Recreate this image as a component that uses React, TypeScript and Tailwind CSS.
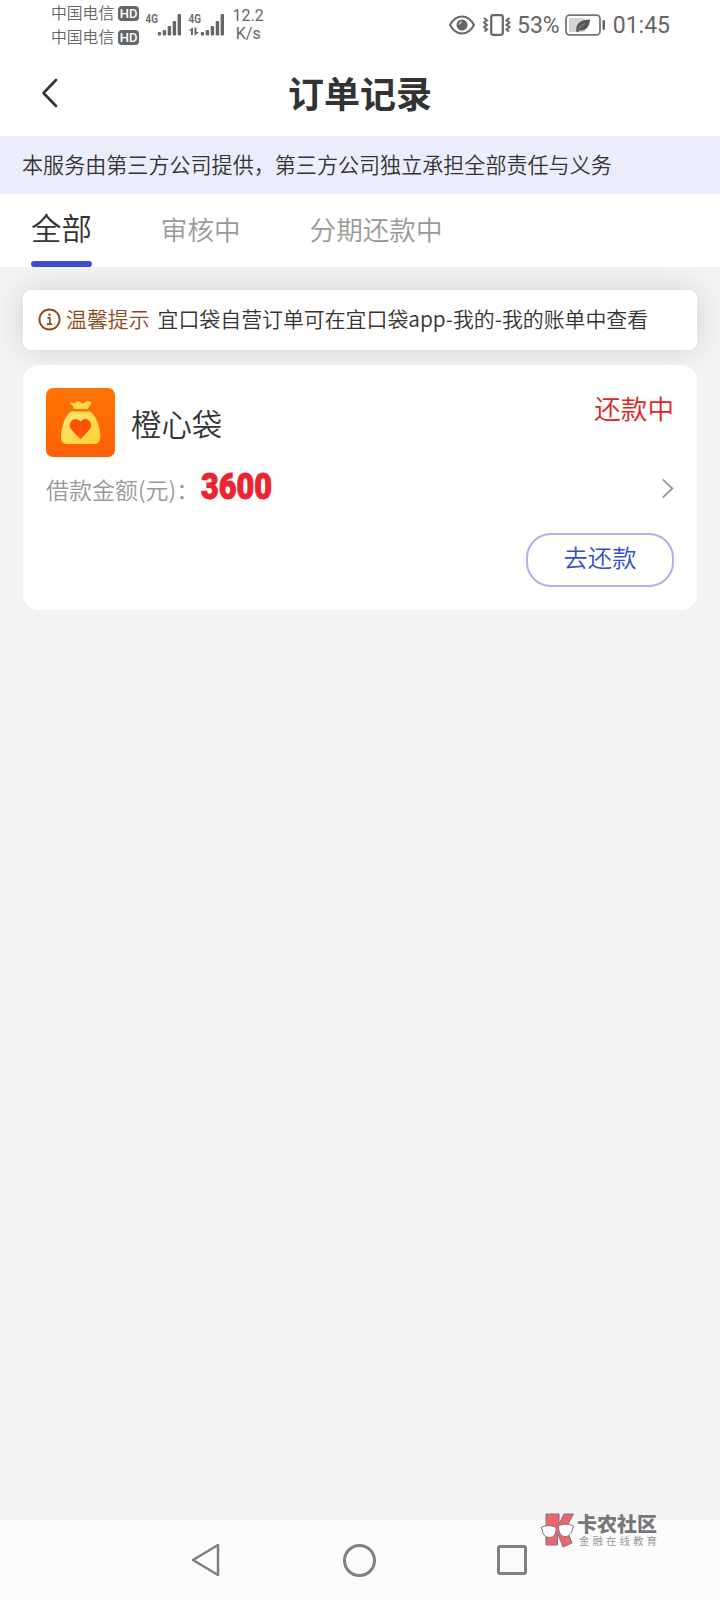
const carriers = ["中国电信", "中国电信"];

const tabs = [
  { label: "全部", active: true },
  { label: "审核中", active: false },
  { label: "分期还款中", active: false },
];

function SignalBars({ data = false }: { data?: boolean }) {
  return (
    <svg className="h-6 w-9 overflow-visible" viewBox="0 0 36 24" fill="#666">
      <text x="0.5" y="9.5" fontSize="12.5" fontWeight="600" fontFamily="Roboto, sans-serif" textLength="12.5" lengthAdjust="spacingAndGlyphs">
        4G
      </text>
      <rect x="12.8" y="19" width="3.2" height="3.5" rx="1" />
      <rect x="17.7" y="17" width="3.4" height="5.5" rx="1" />
      <rect x="22.7" y="13" width="3.4" height="9.5" rx="1" />
      <rect x="27.7" y="8" width="3.4" height="14.5" rx="1" />
      <rect x="32.6" y="1" width="3.4" height="21.5" rx="1" />
      {data && <path d="M5 14.500v7.500H3v-4.500H.3zM6.500 14.500h2v4.500H11L7 22.500h-.5z" />}
    </svg>
  );
}

function StatusBar() {
  return (
    <div className="flex h-[50px] items-center justify-between pl-[51px] pr-[50px] font-['Roboto','Noto_Sans_CJK_SC',sans-serif] font-normal text-[#666]">
      <div className="flex items-center">
        <div className="flex flex-col pt-px">
          {carriers.map((name, i) => (
            <div key={i} className="flex h-6 items-center gap-1">
              <span className="text-[15.8px] font-[350] leading-6">{name}</span>
              <span className="flex h-[15px] w-[21px] items-center justify-center rounded bg-[#666] text-[13px] font-medium leading-none text-white">
                HD
              </span>
            </div>
          ))}
        </div>
        <div className="ml-[6px] flex gap-[7px]">
          <SignalBars />
          <SignalBars data />
        </div>
        <div className="ml-[8px] w-[32px] text-center text-[16px] leading-[18px]">
          <div>12.2</div>
          <div>K/s</div>
        </div>
      </div>

      <div className="flex items-center">
        <svg className="h-5 w-[26px]" viewBox="0 0 26 20" fill="none" stroke="#666">
          <path d="M1 10C4 4.500 8.300 1.500 13 1.500S22 4.500 25 10c-3 5.500-7.300 8.500-12 8.500S4 15.500 1 10z" strokeWidth="2" />
          <circle cx="13" cy="10" r="5.500" fill="#666" stroke="none" />
          <path d="M10.300 9.500a3 3 0 0 1 2.500-2.500" stroke="#ddd" strokeWidth="1.300" />
        </svg>
        <svg className="ml-[8px] h-[22px] w-7" viewBox="0 0 28 22" fill="none" stroke="#666">
          <rect x="8.200" y="1.200" width="11.600" height="19.600" rx="2" strokeWidth="2.200" />
          <path d="M1 4l3 2.500-3 2 3 2.500-3 2 3 2.500-2.500 2M26.500 4l-3 2.500 3 2-3 2.500 3 2-3 2.500 2.500 2" strokeWidth="2" />
        </svg>
        <span className="ml-[6px] text-[23px] leading-none">53%</span>
        <svg className="ml-[5px] h-[22px] w-[41px]" viewBox="0 0 41 22" fill="none">
          <rect x="4" y="4" width="16" height="14" fill="#d4d4d4" />
          <rect x="1" y="1.200" width="34" height="19.600" rx="3.500" stroke="#777" strokeWidth="1.800" />
          <rect x="37.500" y="6" width="2.500" height="10" rx="1" fill="#666" />
          <path d="M11.500 18c-1.500-8 3-12 13.500-12.500C24.500 13 21 17 14.500 16.500l-1.500 1.800z" fill="#555" />
          <path d="M13.500 15.500c1.500-3 4-5 6.500-6" stroke="#aaa" strokeWidth="0.800" />
        </svg>
        <span className="ml-[7px] text-[23px] leading-none">01:45</span>
      </div>
    </div>
  );
}

function MoneyBag() {
  return (
    <svg className="h-[69px] w-[69px]" viewBox="0 0 69 69">
      <defs>
        <linearGradient id="tile" x1="0" y1="0" x2="0" y2="1">
          <stop offset="0" stopColor="#ff7400" />
          <stop offset="1" stopColor="#ff600a" />
        </linearGradient>
        <linearGradient id="bag" x1="0" y1="0" x2="1" y2="1">
          <stop offset="0" stopColor="#ffe676" />
          <stop offset="1" stopColor="#ffd030" />
        </linearGradient>
      </defs>
      <rect width="69" height="69" rx="7" fill="url(#tile)" />
      <path d="M24 14.500c2.500-.5 4 1.200 5.500 0 2-1.800 3.500-1.800 5.500 0 1.500 1.200 3 .8 4.500-.5 2-1.500 4.500-1.500 5.500.5.500 2-1.700 2.500-2.200 4.500-.3 1.300-.8 2-2 2H29c-1.500 0-1.500-1.500-2-2.500-.7-1.500-2.500-2.300-3-4z" fill="#ffd94a" />
      <path d="M25 23.500h19c6 4 10.300 15 10.300 24.500 0 5.500-2 8-6.500 8H21.500c-4.500 0-6.700-2.500-6.500-8C15.500 38.500 19 27.500 25 23.500z" fill="url(#bag)" />
      <path d="M34.500 51.200 25.700 42c-6-6.500 3.300-15.500 8.800-8.200 5.500-7.300 14.800 1.700 8.800 8.200z" fill="#ff5208" />
    </svg>
  );
}

function OrderCard() {
  return (
    <div className="mt-[15px] flex h-[245px] flex-col rounded-2xl bg-white px-[23px] pt-[23px]">
      <div className="flex justify-between">
        <div className="flex items-center gap-4">
          <MoneyBag />
          <span className="pt-[2px] text-[30.4px] leading-none text-[#333]">橙心袋</span>
        </div>
        <span className="mt-[7px] text-[26.600px] leading-[26px] text-[#e02424]">还款中</span>
      </div>
      <div className="mt-[11px] flex h-[38px] items-center justify-between">
        <div className="flex items-center">
          <span className="pt-[4px] text-[23px] leading-none text-[#999]">借款金额(元)：</span>
          <span className="ml-[2px] inline-block origin-left scale-x-[0.85] pb-px font-[Roboto,sans-serif] text-[36px] font-black leading-none text-[#ee2330] [-webkit-text-stroke:1px_#ee2330]">
            3600
          </span>
        </div>
        <svg className="mt-[3px] h-[21px] w-[13px]" viewBox="0 0 13 22" fill="none" stroke="#999" strokeWidth="2">
          <path d="M1.500 1.500 11.500 11l-10 9.500" />
        </svg>
      </div>
      <button className="mt-[27px] h-[54px] w-[148px] self-end rounded-[25px] border-2 border-[#aab4e6] pb-[6px] text-[24.300px] leading-none text-[#3450cb]">
        去还款
      </button>
    </div>
  );
}

function Watermark() {
  return (
    <div className="absolute left-[540px] top-[1512px] flex w-[120px]">
      <svg className="h-9 w-[36px] shrink-0" viewBox="0 0 36 36" stroke="#777" strokeWidth="1">
        <path d="M6 2h13v10l5-10h9.500L26 16l6 15-9 4-5.500-14v12H6z" fill="#f06470" />
        <path d="M1 15.500c5-2.500 10-2.500 15 0 .5 6-2 10-6.500 10S2.500 22 2.500 18zM18.500 14c5-2.500 10-2.500 15 0l-1 3c-1 5-3.500 7.500-7.500 7.500s-6.500-4-6.500-10.500z" fill="#fff" />
      </svg>
      <div className="ml-[1px]">
        <div className="whitespace-nowrap text-[20px] font-black leading-[23px] text-[#777]">卡农社区</div>
        <div className="ml-[2px] whitespace-nowrap text-[10.500px] font-normal leading-[12px] tracking-[3px] text-[#999]">金融在线教育</div>
      </div>
    </div>
  );
}

export default function App() {
  return (
    <div className="relative flex h-[1600px] w-[720px] flex-col overflow-hidden bg-[#f3f3f3] font-['Noto_Sans_CJK_SC',sans-serif] font-[350]">
      <div className="bg-white">
        <StatusBar />
        <header className="grid h-[86px] grid-cols-3 items-center">
          <svg className="ml-[40px] h-[30px] w-5" viewBox="0 0 20 30" fill="none" stroke="#333" strokeWidth="2.600" strokeLinecap="round" strokeLinejoin="round">
            <path d="M16 2 3.500 15 16 28" />
          </svg>
          <h1 className="pb-[3px] text-center text-[36px] font-bold leading-none text-[#333]">订单记录</h1>
        </header>
      </div>

      <div className="flex h-[58px] items-center bg-[#ebedfc] pl-[22px] text-[21.070px] text-[#333]">
        本服务由第三方公司提供，第三方公司独立承担全部责任与义务
      </div>

      <nav className="flex h-[73px] gap-[69px] bg-white pl-[31px]">
        {tabs.map((tab) => (
          <div key={tab.label} className="flex flex-col justify-between">
            {tab.active ? (
              <>
                <span className="pt-[3px] text-[30.400px] leading-[60px] text-[#333]">{tab.label}</span>
                <span className="h-[6px] rounded-full bg-[#3b52cc]" />
              </>
            ) : (
              <span className="pt-[5px] text-[26.600px] leading-[60px] text-[#999]">{tab.label}</span>
            )}
          </div>
        ))}
      </nav>

      <main className="flex-1 overflow-hidden px-[23px] pt-[23px]">
        <div className="flex h-[60px] items-center rounded-lg bg-white pl-[15px] text-[20.900px] shadow-[0_0_30px_rgba(0,0,0,0.15)]">
          <svg className="mb-[2px] h-[23px] w-[23px]" viewBox="0 0 22 22" fill="none" stroke="#8a4b1c" strokeWidth="1.800">
            <circle cx="11" cy="11" r="9.600" />
            <path d="M9 9.500h2.300v6M8.500 15.500h5" strokeWidth="1.600" />
            <circle cx="11" cy="6.500" r="1.200" fill="#8a4b1c" stroke="none" />
          </svg>
          <span className="ml-[5px] pb-[3px] text-[#8a4b1c]">温馨提示</span>
          <span className="ml-2 whitespace-nowrap pb-[3px] text-[#333]">宜口袋自营订单可在宜口袋app-我的-我的账单中查看</span>
        </div>
        <OrderCard />
      </main>

      <footer className="flex h-20 items-center justify-between bg-[#fcfcfc] pl-[190px] pr-[193px]">
        <svg className="h-9 w-[30px]" viewBox="0 0 30 36" fill="none" stroke="#808080" strokeWidth="2.500" strokeLinejoin="round">
          <path d="M3 18 28 3v30z" />
        </svg>
        <span className="ml-[2px] h-[33px] w-[33px] rounded-full border-[3px] border-[#808080]" />
        <span className="h-[30px] w-[30px] rounded-[3px] border-[3px] border-[#808080]" />
      </footer>

      <Watermark />
    </div>
  );
}
